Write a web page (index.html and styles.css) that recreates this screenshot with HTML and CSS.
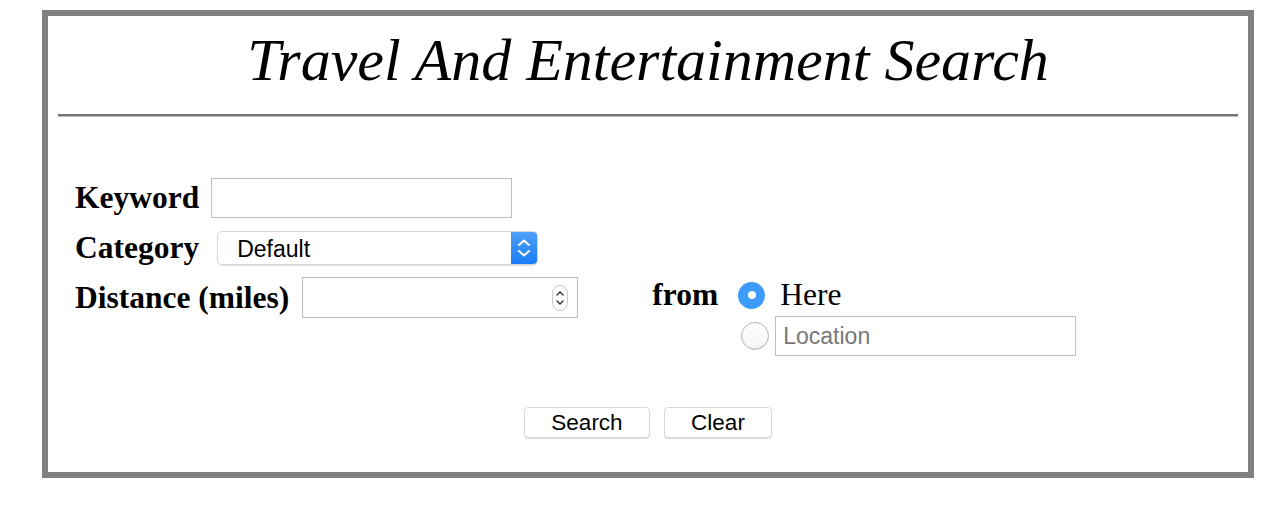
FILE: index.html
```html
<!DOCTYPE html>
<html>
<head>
<meta charset="utf-8">
<link rel="stylesheet" href="styles.css">
</head>
<body>
<div class="box">
  <h1 class="title">Travel And Entertainment Search</h1>
  <hr class="rule">
  <form class="form">
    <div class="row row-keyword">
      <label class="lbl">Keyword</label>
      <input class="txt txt-keyword" type="text">
    </div>
    <div class="row row-category">
      <label class="lbl">Category</label>
      <div class="select">
        <span class="select-text">Default</span>
        <span class="select-arrow">
          <svg width="26" height="32" viewBox="0 0 26 32"><path d="M8 13 L13 8.5 L18 13" fill="none" stroke="#fff" stroke-width="2" stroke-linecap="round" stroke-linejoin="round"/><path d="M8 19 L13 23.5 L18 19" fill="none" stroke="#fff" stroke-width="2" stroke-linecap="round" stroke-linejoin="round"/></svg>
        </span>
      </div>
    </div>
    <div class="row row-distance">
      <div class="dist">
        <label class="lbl">Distance (miles)</label>
        <div class="numbox">
          <input class="num-in" type="text">
          <span class="spin">
            <svg width="16" height="26" viewBox="0 0 16 26"><rect x="0.5" y="0.5" width="15" height="25" rx="7.5" fill="#fff" stroke="#c8c8c8"/><path d="M5 10 L8 7 L11 10" fill="none" stroke="#333" stroke-width="1.4" stroke-linecap="round" stroke-linejoin="round"/><path d="M5 16 L8 19 L11 16" fill="none" stroke="#333" stroke-width="1.4" stroke-linecap="round" stroke-linejoin="round"/></svg>
          </span>
        </div>
      </div>
      <div class="from">
        <span class="lbl from-lbl">from</span>
        <div class="opts">
          <div class="opt opt-here">
            <span class="radio radio-on"><span class="dot"></span></span>
            <span class="here">Here</span>
          </div>
          <div class="opt opt-loc">
            <span class="radio radio-off"></span>
            <input class="txt txt-loc" type="text" placeholder="Location">
          </div>
        </div>
      </div>
    </div>
    <div class="buttons">
      <button type="button" class="btn btn-search">Search</button>
      <button type="button" class="btn btn-clear">Clear</button>
    </div>
  </form>
</div>
</body>
</html>
```
FILE: styles.css
```css
html, body {
  margin: 0;
  padding: 0;
  background: #fff;
}
body {
  font-family: "Liberation Serif", "Times New Roman", serif;
  color: #000;
}
.box {
  box-sizing: border-box;
  width: 1212px;
  height: 468px;
  margin: 10px 0 0 42px;
  border: 6px solid #808080;
  padding: 0 10px;
}
.title {
  margin: 0;
  padding-top: 9px;
  height: 88px;
  box-sizing: border-box;
  text-align: center;
  font-style: italic;
  font-weight: normal;
  font-size: 60px;
  line-height: 70px;
}
.rule {
  margin: 10px 0 0 0;
  height: 0;
  border: 0;
  border-top: 2px solid #747474;
  border-bottom: 1px solid #bdbdbd;
}
.form {
  padding-left: 17px;
  margin: 0;
}
.row {
  display: flex;
  align-items: center;
}
.lbl {
  font-weight: bold;
  font-size: 31.5px;
  line-height: 36px;
}
.row-keyword {
  margin-top: 61px;
  gap: 12px;
}
.txt {
  box-sizing: border-box;
  border: 1px solid #bdbdbd;
  border-radius: 0;
  margin: 0;
  padding: 0 7px;
  font-family: "Liberation Sans", Arial, sans-serif;
  font-size: 23px;
  outline: none;
}
.txt-keyword {
  width: 301px;
  height: 40px;
}
.row-category {
  margin-top: 12px;
  gap: 18px;
}
.select {
  box-sizing: border-box;
  width: 321px;
  height: 34px;
  display: flex;
  align-items: stretch;
  border: 1px solid #d6d6d6;
  border-radius: 5px;
  box-shadow: 0 1px 1px rgba(0,0,0,0.12);
  overflow: hidden;
}
.select-text {
  flex: 1;
  padding-left: 19px;
  font-family: "Liberation Sans", Arial, sans-serif;
  font-size: 23px;
  line-height: 34px;
}
.select-arrow {
  width: 26px;
  display: flex;
  align-items: center;
  justify-content: center;
  background: linear-gradient(#4ea0f8, #1a7cf6);
}
.row-distance {
  margin-top: 11px;
  align-items: flex-start;
}
.dist {
  display: flex;
  align-items: center;
  gap: 13px;
}
.numbox {
  box-sizing: border-box;
  width: 276px;
  height: 41px;
  border: 1px solid #bdbdbd;
  display: flex;
  align-items: center;
  padding-right: 9px;
}
.num-in {
  flex: 1;
  min-width: 0;
  border: 0;
  outline: none;
  height: 100%;
  padding: 0 7px;
  font-size: 20px;
  background: transparent;
}
.spin {
  display: flex;
}
.from {
  display: flex;
  align-items: flex-start;
  margin-left: 74px;
}
.from-lbl {
  line-height: 36px;
  margin-right: 20px;
}
.opts {
  display: flex;
  flex-direction: column;
}
.opt {
  display: flex;
  align-items: center;
}
.opt-here {
  height: 36px;
}
.opt-loc {
  margin-top: 3px;
  height: 40px;
}
.radio {
  box-sizing: border-box;
  width: 27px;
  height: 27px;
  border-radius: 50%;
  display: flex;
  align-items: center;
  justify-content: center;
}
.radio-on {
  background: #3d9bfb;
}
.dot {
  width: 8px;
  height: 8px;
  border-radius: 50%;
  background: #fff;
}
.radio-off {
  width: 28px;
  height: 28px;
  margin-left: 3px;
  border: 1px solid #b4b4b4;
  background: linear-gradient(#fff, #f4f4f4);
  box-shadow: inset 0 -1px 1px rgba(0,0,0,0.08);
}
.here {
  font-size: 31.5px;
  line-height: 36px;
  margin-left: 15px;
}
.txt-loc {
  width: 301px;
  height: 40px;
  margin-left: 6px;
}
.txt-loc::placeholder {
  color: #777;
}
.buttons {
  display: flex;
  justify-content: center;
  gap: 14px;
  margin-top: 51px;
  padding-right: 17px;
}
.btn {
  box-sizing: border-box;
  height: 31px;
  border: 1px solid #d8d8d8;
  border-radius: 4px;
  background: #fff;
  box-shadow: 0 1px 1px rgba(0,0,0,0.15);
  font-family: "Liberation Sans", Arial, sans-serif;
  font-size: 22.5px;
  color: #000;
  padding: 0;
  margin: 0;
}
.btn-search {
  width: 126px;
}
.btn-clear {
  width: 108px;
}
```
